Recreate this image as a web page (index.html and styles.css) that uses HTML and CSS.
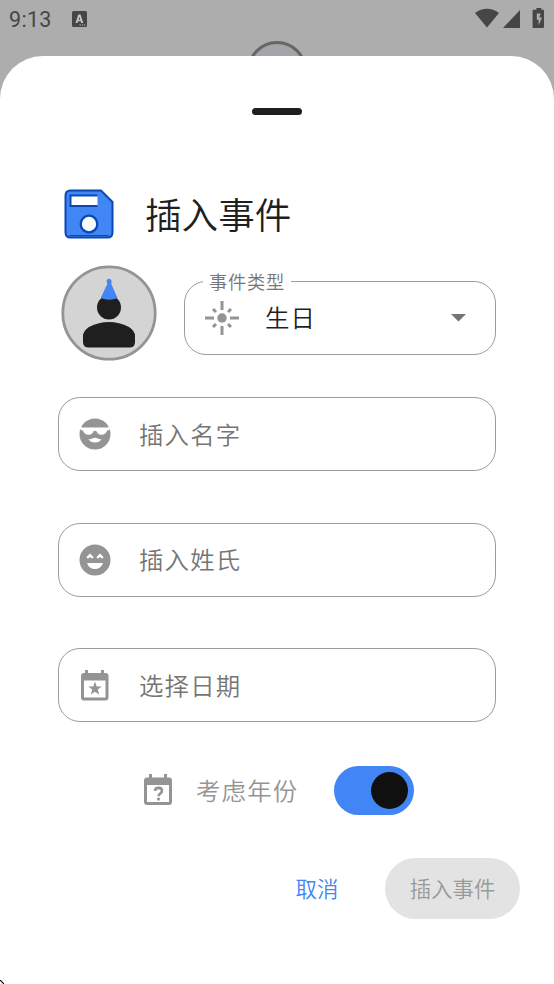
FILE: index.html
```html
<!DOCTYPE html>
<html lang="zh-CN">
<head>
  <meta charset="UTF-8">
  <meta name="viewport" content="width=device-width, initial-scale=1.0">
  <title>插入事件</title>
  <link rel="stylesheet" href="styles.css">
</head>
<body>

  <div class="screen">
    <header class="status-bar">
      <span class="clock">9:13</span>
      <svg class="status-app" width="15" height="16" viewBox="0 0 15 16">
        <rect width="15" height="16" rx="1.5" fill="#464646"/>
        <path d="M3.5 12L6.3 3.5h2.2L11.3 12H9.2l-.5-1.7H6L5.5 12zM6.5 8.7h1.7L7.4 6z" fill="#c4c4c4"/>
        <path d="M7.5 14h1.5M10 14h1.2M12.2 14h1.2" stroke="#c4c4c4"/>
      </svg>
      <svg class="status-icons" width="71" height="21" viewBox="0 0 71 21" fill="#464646">
        <path d="M0 5Q12 -3.4 24 5L12 19.5z"/>
        <path d="M45 2v18H28z"/>
        <path d="M58.6 1.8h2.8V0h5v1.8H68q1 0 1 1V19q0 1-1 1H58.6q-1 0-1-1V2.8q0-1 1-1z"/>
        <path d="M64.8 5.5h-3v6.300h1.800v5.700L67 9.500h-2.700l1.300-4z" fill="#adadad"/>
      </svg>
    </header>
    <div class="backdrop-avatar"></div>

    <main class="sheet">
      <div class="handle"></div>

      <div class="title-row">
        <svg class="save-icon" width="50" height="50" viewBox="0 0 50 50" stroke="#0a48b3" stroke-width="2">
          <path d="M6.5 1.5H37L48.5 13V43.5Q48.5 48.5 43.5 48.5H6.5Q1.5 48.5 1.5 43.5V6.5Q1.5 1.5 6.5 1.5z" fill="#4285f4"/>
          <path d="M5.5 46.5H44.500" stroke-width="1"/>
          <path d="M33.500 6.500H6.500V17H33.500" fill="#fff"/>
          <circle cx="25" cy="35" r="8.300" fill="#f8fafe" stroke-width="2.300"/>
        </svg>
        <h1>插入事件</h1>
      </div>

      <div class="type-row">
        <svg class="avatar" width="96" height="96" viewBox="0 0 96 96">
          <circle cx="48" cy="48" r="46.2" fill="#d4d4d4" stroke="#949494" stroke-width="2.800"/>
          <circle cx="48" cy="42.500" r="12" fill="#1f1f1f"/>
          <path d="M22 71Q22 66 28 62Q48 52 68 62Q74 66 74 71V77Q74 82.500 68.500 82.500H27.500Q22 82.500 22 77z" fill="#1f1f1f"/>
          <path d="M46.300 19Q44.500 14 48 13.800Q51.500 14 50.300 19L56.500 33Q48 36.600 39.700 33z" fill="#4285f4"/>
        </svg>
        <fieldset class="field select">
          <legend>事件类型</legend>
          <svg class="sun-icon" width="34" height="34" viewBox="0 0 34 34" fill="#949494" stroke="#949494" stroke-width="3">
            <circle cx="17" cy="17" r="4.700" stroke="none"/>
            <path d="M17 0v9M17 25v9M0 17h9M25 17h9"/>
            <path d="M8 8l3 3M26 8l-3 3M8 26l3-3M26 26l-3-3"/>
          </svg>
          <span class="value">生日</span>
          <svg class="arrow" width="15" height="8" viewBox="0 0 15 8"><path d="M0 0h15L7.500 7.500z" fill="#757575"/></svg>
        </fieldset>
      </div>

      <div class="field">
        <svg width="32" height="32" viewBox="0 0 32 32">
          <circle cx="16" cy="16" r="15.500" fill="#949494"/>
          <path d="M0 7.500L3 9.500H29L32 7.500V10.500L29 12.500H28Q27 16.500 22.500 16.800Q18.500 16.500 17.300 13H14.700Q13.500 16.500 9.500 16.800Q5 16.500 4 12.500H3L0 10.500z" fill="#fff"/>
          <path d="M9.300 21Q11.500 21.800 13.500 20.300Q16 19.300 18.500 20.300Q20.500 21.800 22.700 21Q20.500 24.500 16 24.500Q11.500 24.500 9.300 21z" fill="#fff"/>
        </svg>
        <span class="hint">插入名字</span>
      </div>

      <div class="field">
        <svg width="32" height="32" viewBox="0 0 32 32">
          <circle cx="16" cy="16" r="15.500" fill="#949494"/>
          <path d="M8.200 14L11 11.200L13.800 14M18.200 14L21 11.200L23.800 14" fill="none" stroke="#fff" stroke-width="2.400"/>
          <path d="M8 19H24Q21.800 25 16 25Q10.200 25 8 19z" fill="#fff"/>
        </svg>
        <span class="hint">插入姓氏</span>
      </div>

      <div class="field">
        <svg width="32" height="32" viewBox="0 0 32 32" fill="#949494">
          <path fill-rule="evenodd" d="M6 1h3v3H22V1h3v3h1.500q3 0 3 3V28.500q0 3-3 3H5q-3 0-3-3V7q0-3 3-3H6zM5 11.500V28.500H26.500V11.500z"/>
          <path d="M16 12.500l1.700 4.900 5.100.1-4.100 3.100 1.500 5L16 22.700l-4.200 2.900 1.500-5L9.200 17.500l5.100-.1z"/>
        </svg>
        <span class="hint">选择日期</span>
      </div>

      <div class="year-row">
        <svg width="28" height="32" viewBox="0 0 28 32" fill="#949494">
          <path fill-rule="evenodd" d="M5 0h3v3.500H20V0h3v3.500h2q3 0 3 3V28q0 3-3 3H3q-3 0-3-3V6.500q0-3 3-3h2zM3 11V28H25V11z"/>
          <path d="M11 16.800Q11.200 13.900 14.500 13.900Q18 14 18 16.800Q18 18.300 16.200 19.600Q14.600 20.700 14.600 22.300" fill="none" stroke="#949494" stroke-width="2.600"/>
          <circle cx="14.500" cy="25.100" r="1.600"/>
        </svg>
        <span class="year-label">考虑年份</span>
        <div class="switch"><div class="thumb"></div></div>
      </div>

      <div class="actions">
        <button class="cancel">取消</button>
        <button class="insert" disabled>插入事件</button>
      </div>
    </main>

    <svg class="corner" width="4" height="4" viewBox="0 0 4 4"><path d="M0 0l4 4" stroke="#000" stroke-width="1.200"/></svg>
  </div>

</body>
</html>
```
FILE: styles.css
```css
* {
  box-sizing: border-box;
}

body {
  margin: 0;
  font-family: Roboto, "Noto Sans CJK SC DemiLight", "Noto Sans CJK SC", sans-serif;
  font-weight: 350;
  background-color: #adadad;
}

svg {
  display: block;
  flex-shrink: 0;
}

.screen {
  position: relative;
  height: 984px;
  overflow: hidden;
}

.status-bar {
  display: flex;
  align-items: center;
  height: 56px;
  padding: 0 4px 18px 9px;
}

.clock {
  width: 63px;
  font-size: 21.5px;
  font-weight: 400;
  letter-spacing: 0.3px;
  color: #464646;
}

.status-icons {
  margin: -2px 4px 0 auto;
  width: 71px;
}

/* top of the picture on the page behind the sheet */
.backdrop-avatar {
  position: absolute;
  left: 247px;
  top: 41px;
  width: 60px;
  height: 60px;
  border: 3px solid #666;
  border-radius: 50%;
  background-color: #a3a5a9;
}

.sheet {
  position: relative;
  height: 928px;
  padding: 52px 58px 0;
  background-color: #fff;
  border-radius: 43px 43px 0 0;
}

.handle {
  width: 50px;
  height: 7px;
  margin: 0 auto;
  border-radius: 4px;
  background-color: #1f1f1f;
}

.title-row {
  display: flex;
  align-items: center;
  height: 50px;
  margin-top: 74px;
  padding-left: 6px;
}

h1 {
  margin: 5px 0 0 31px;
  font-size: 36.6px;
  font-weight: 350;
  line-height: 50px;
  color: #1f1f1f;
}

.type-row {
  display: flex;
  align-items: flex-start;
  height: 96px;
  margin: 26px 0 36px;
  padding-left: 3px;
}

.field {
  display: flex;
  align-items: center;
  height: 74px;
  margin: 0 0 51.500px;
  padding: 0 20px;
  border: 1px solid #9c9c9c;
  border-radius: 22px;
}

.select {
  flex: 1;
  min-width: 0;
  height: 83px;
  margin: 7px 0 0 27px;
  padding: 0 29px 8px 20px;
}

.select legend {
  height: 18px;
  margin: 0 0 0 -2px;
  padding: 2px 6px 0;
  font-size: 18.300px;
  line-height: 18px;
  letter-spacing: 0.700px;
  color: #757575;
}

.value,
.hint,
.year-label {
  padding-top: 3px;
  font-size: 24.400px;
  line-height: 36px;
  letter-spacing: 1.200px;
}

.value {
  margin-left: 26px;
  padding-top: 2px;
  color: #1f1f1f;
}

.arrow {
  margin-left: auto;
}

.hint {
  margin-left: 28px;
  color: #757575;
}

.year-row {
  display: flex;
  align-items: center;
  height: 49px;
  margin-top: -8px;
  padding-left: 86px;
}

.year-label {
  margin-left: 24px;
  color: #949494;
}

.switch {
  display: flex;
  align-items: center;
  justify-content: flex-end;
  width: 80px;
  height: 49px;
  margin-left: 36px;
  padding-right: 6px;
  border-radius: 25px;
  background-color: #4285f4;
}

.thumb {
  width: 37px;
  height: 37px;
  border-radius: 50%;
  background-color: #101010;
}

.actions {
  display: flex;
  justify-content: flex-end;
  margin: 43px -24px 0 0;
}

button {
  height: 61px;
  padding: 0 0 2px;
  border: none;
  background: none;
  font-family: inherit;
  font-size: 21.400px;
  font-weight: 350;
}

.cancel {
  width: 92px;
  margin-right: 22px;
  color: #4285f4;
}

.insert {
  width: 135px;
  border-radius: 31px;
  background-color: #e3e3e3;
  color: #999;
}

.corner {
  position: absolute;
  left: 0;
  bottom: 0;
}
```
